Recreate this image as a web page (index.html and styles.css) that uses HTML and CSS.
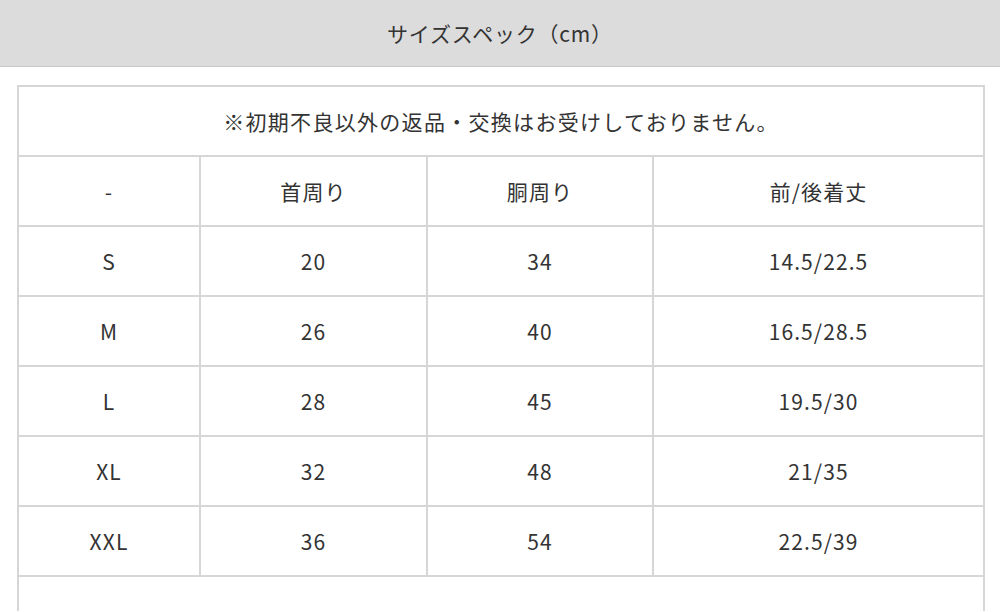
FILE: index.html
```html
<!DOCTYPE html>
<html lang="ja">
<head>
<meta charset="utf-8">
<link rel="stylesheet" href="styles.css">
</head>
<body>
<div class="title-bar">サイズスペック（cm）</div>
<table class="spec">
  <colgroup>
    <col class="c1"><col class="c2"><col class="c3"><col class="c4">
  </colgroup>
  <tr><td colspan="4" class="note">※初期不良以外の返品・交換はお受けしておりません。</td></tr>
  <tr><td>-</td><td>首周り</td><td>胴周り</td><td>前/後着丈</td></tr>
  <tr><td>S</td><td>20</td><td>34</td><td>14.5/22.5</td></tr>
  <tr><td>M</td><td>26</td><td>40</td><td>16.5/28.5</td></tr>
  <tr><td>L</td><td>28</td><td>45</td><td>19.5/30</td></tr>
  <tr><td>XL</td><td>32</td><td>48</td><td>21/35</td></tr>
  <tr><td>XXL</td><td>36</td><td>54</td><td>22.5/39</td></tr>
  <tr><td colspan="4" class="tail"></td></tr>
</table>
</body>
</html>
```
FILE: styles.css
```css
html, body {
  margin: 0;
  padding: 0;
  background: #fff;
  font-family: "Noto Sans CJK JP", "Noto Sans", sans-serif;
  color: #333;
  overflow: hidden;
}
.title-bar {
  height: 66px;
  line-height: 66px;
  background: #dcdcdc;
  border-bottom: 1px solid #c8c8c8;
  text-align: center;
  font-size: 21px;
  letter-spacing: 0.8px;
}
.spec {
  margin: 18px 17px 0;
  width: 966px;
  border-collapse: collapse;
  table-layout: fixed;
}
.c1 { width: 182px; }
.c2 { width: 227px; }
.c3 { width: 226px; }
.c4 { width: 331px; }
.spec td {
  border: 2px solid #d6d6d6;
  height: 68px;
  padding: 0;
  text-align: center;
  vertical-align: middle;
  font-size: 21px;
  letter-spacing: 1.1px;
}
.spec td.note {
  letter-spacing: 1.3px;
}
.spec td.tail {
  height: 34px;
  border-bottom: none;
}
```
